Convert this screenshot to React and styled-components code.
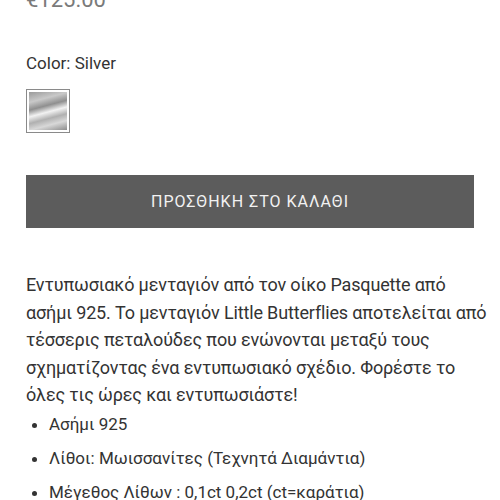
import React from 'react';
import styled, { createGlobalStyle } from 'styled-components';

const GlobalStyle = createGlobalStyle`
  html, body {
    margin: 0;
    padding: 0;
    background: #ffffff;
    overflow: hidden;
  }
  body {
    font-family: Roboto, "Noto Sans", sans-serif;
    color: #333333;
  }
`;

const Page = styled.div`
  width: 500px;
  height: 500px;
  box-sizing: border-box;
  padding: 0 26px;
  overflow: hidden;
`;

const Price = styled.div`
  margin-top: -13px;
  font-size: 22px;
  line-height: 26px;
  color: #7a7a7a;
`;

const OptionLabel = styled.div`
  margin-top: 38px;
  font-size: 17px;
  line-height: 24px;
  color: #333333;
`;

const Swatches = styled.div`
  display: flex;
  gap: 10px;
  margin-top: 14px;
`;

const Swatch = styled.button`
  width: 44px;
  height: 44px;
  padding: 2px;
  box-sizing: border-box;
  border: 1px solid ${(p) => (p.selected ? '#8a8a8a' : '#dddddd')};
  background: #ffffff;
  cursor: pointer;
`;

const SwatchFill = styled.span`
  display: block;
  width: 100%;
  height: 100%;
  background: linear-gradient(
    165deg,
    #9a9a9a 0%,
    #c9c9c9 22%,
    #8f8f8f 38%,
    #f2f2f2 52%,
    #b0b0b0 66%,
    #d8d8d8 80%,
    #8c8c8c 100%
  );
`;

const AddToCart = styled.button`
  display: block;
  width: 100%;
  height: 53px;
  margin-top: 42px;
  border: none;
  background: #5c5c5c;
  color: #f2f2f2;
  font-family: Roboto, "Noto Sans", sans-serif;
  font-size: 16px;
  letter-spacing: 1px;
  cursor: pointer;
`;

// the source keeps these line breaks; the text box runs a little past the button edge
const Description = styled.p`
  margin: 43px -16px 0 0;
  font-size: 18px;
  line-height: 27.5px;
  letter-spacing: -0.15px;
  color: #333333;
`;

const Features = styled.ul`
  margin: -2px 0 0;
  padding: 0 0 0 23px;
  list-style: disc;
`;

const Feature = styled.li`
  font-size: 17px;
  line-height: 34px;
  color: #333333;
`;

const features = [
  'Ασήμι 925',
  'Λίθοι: Μωισσανίτες (Τεχνητά Διαμάντια)',
  'Μέγεθος Λίθων : 0,1ct 0,2ct (ct=καράτια)',
];

export default function App() {
  return (
    <Page>
      <GlobalStyle />
      <Price>€125.00</Price>
      <OptionLabel>Color: Silver</OptionLabel>
      <Swatches>
        <Swatch selected aria-label="Silver">
          <SwatchFill />
        </Swatch>
      </Swatches>
      <AddToCart>ΠΡΟΣΘΗΚΗ ΣΤΟ ΚΑΛΑΘΙ</AddToCart>
      <Description>
        Εντυπωσιακό μενταγιόν από τον οίκο Pasquette από
        <br />
        ασήμι 925. Το μενταγιόν Little Butterflies αποτελείται από
        <br />
        τέσσερις πεταλούδες που ενώνονται μεταξύ τους σχηματίζοντας ένα
        εντυπωσιακό σχέδιο. Φορέστε το
        <br />
        όλες τις ώρες και εντυπωσιάστε!
      </Description>
      <Features>
        {features.map((f) => (
          <Feature key={f}>{f}</Feature>
        ))}
      </Features>
    </Page>
  );
}
